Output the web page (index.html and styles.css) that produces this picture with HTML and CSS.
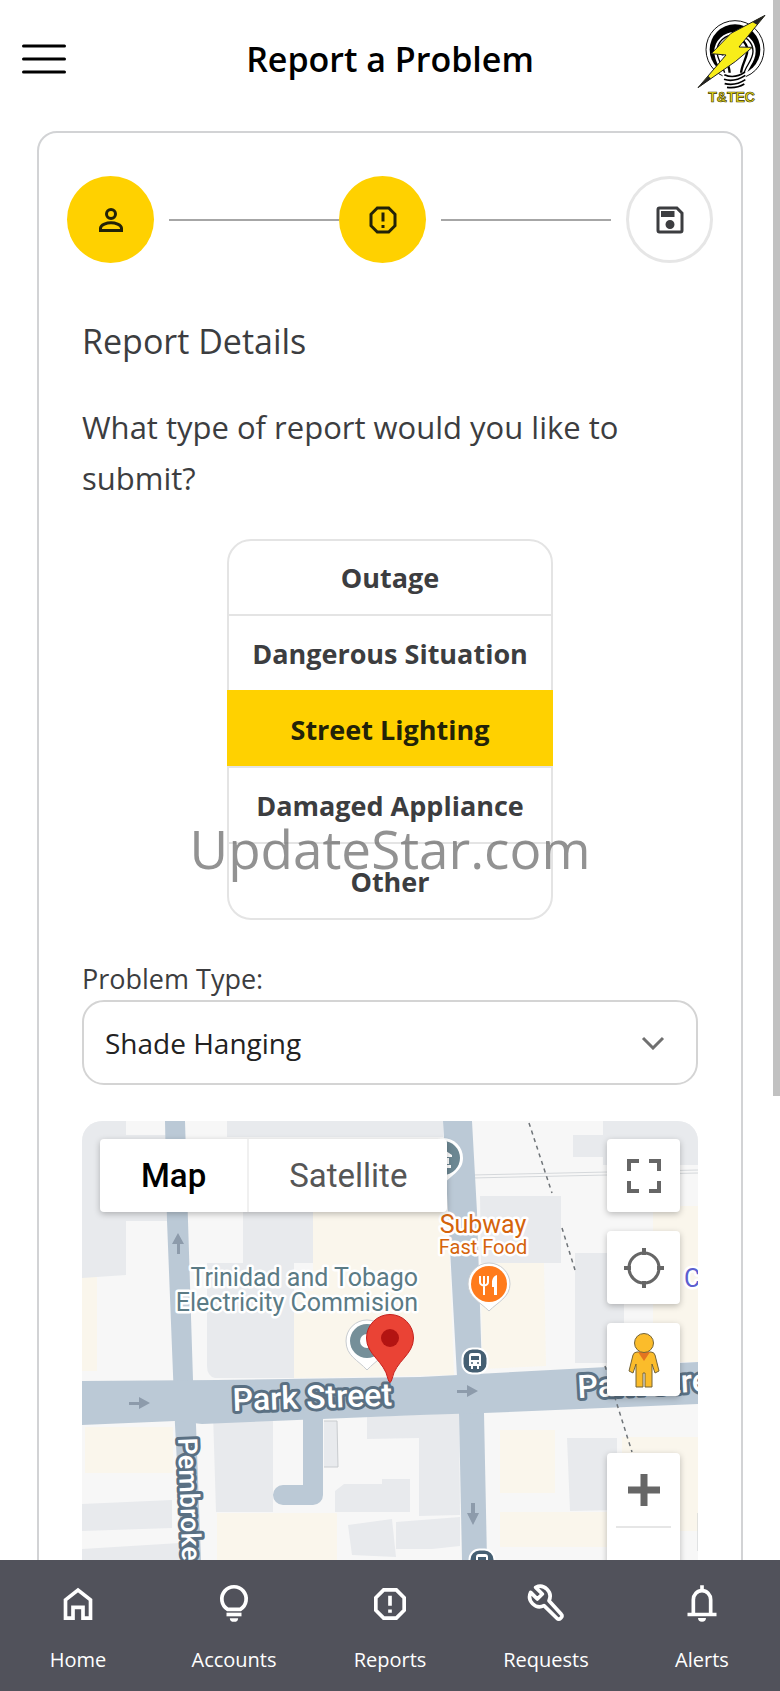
FILE: index.html
```html
<!DOCTYPE html>
<html lang="en">
<head>
<meta charset="utf-8">
<meta name="viewport" content="width=device-width, initial-scale=1">
<title>Report a Problem</title>
<link rel="stylesheet" href="styles.css">
</head>
<body>
<div class="app">
  <header class="topbar">
    <button class="menu-button" type="button" aria-label="Menu">
      <svg viewBox="0 0 44 30" width="44" height="30" stroke="#000" stroke-width="3" stroke-linecap="round"><path d="M1.500 2H42.500M1.500 15H42.500M1.500 28H42.500"/></svg>
    </button>
    <h1 class="topbar-title">Report a Problem</h1>
    <svg class="logo" viewBox="50 40 207 270" role="img" aria-label="T&amp;TEC">
      <circle cx="164" cy="147" r="87" fill="#fff" stroke="#111" stroke-width="3"/>
      <circle cx="164" cy="147" r="76" fill="#000"/>
      <path d="M128 232c-2-26-26-46-26-80a62 58 0 0 1 124 0c0 34-28 54-30 80z" fill="#fff"/>
      <path d="M134 222c-4-26-24-42-24-70a54 50 0 0 1 108 0c0 28-24 44-28 70z" fill="#fff" stroke="#000" stroke-width="4"/>
      <path d="M128 164a38 38 0 1 1 72-6c-4 20-16 36-18 60M148 218c0-20-9-34-16-48" fill="none" stroke="#000" stroke-width="7"/>
      <path d="M122 216l14 12v24q28 20 56 0v-24l12-12z" fill="#fff"/>
      <path d="M132 222q30 14 62-8M131 236q30 10 64-12M133 249q32 8 62-12M140 260q28 4 52-10" fill="none" stroke="#000" stroke-width="5"/>
      <path d="M254 44L152 98L93 159L137 163L53 261L166 182L216 140L176 139Z" fill="#f8ed19" stroke="#222" stroke-width="3"/>
      <path d="M254 44L216 64L230 72ZM53 261L84 226L92 234Z" fill="#222"/>
      <text x="154" y="303" text-anchor="middle" class="logo-text">T&amp;TEC</text>
    </svg>
  </header>

  <main class="content">
    <section class="card">
      <ol class="steps">
        <li class="step step-done" aria-label="Contact">
          <svg viewBox="0 0 24 24" width="36" height="36" fill="none" stroke="currentColor" stroke-width="2"><circle cx="12" cy="8" r="3"/><path d="M5 19v-1.500c0-2.500 4.500-3.700 7-3.700s7 1.200 7 3.700V19z"/></svg>
        </li>
        <li class="step-line" aria-hidden="true"></li>
        <li class="step step-done" aria-current="step" aria-label="Details">
          <svg viewBox="0 0 24 24" width="36" height="36" fill="none" stroke="currentColor" stroke-width="2"><path d="M8.200 4h7.600l4.200 4.200v7.600l-4.200 4.200H8.200L4 15.800V8.200zM12 7v6M12 15.300v2"/></svg>
        </li>
        <li class="step-line step-line-last" aria-hidden="true"></li>
        <li class="step step-todo" aria-label="Save">
          <svg viewBox="0 0 24 24" width="36" height="36" fill="currentColor"><path fill-rule="evenodd" d="M17 3H5a2 2 0 0 0-2 2v14a2 2 0 0 0 2 2h14a2 2 0 0 0 2-2V7zM19 19H5V5h11.200L19 7.800zM12 12a3 3 0 1 0 0 6 3 3 0 0 0 0-6zM6 6h9v4H6z"/></svg>
        </li>
      </ol>

      <form class="report">
        <h2 class="section-title">Report Details</h2>
        <fieldset class="question">
          <legend class="question-text">What type of report would you like to submit?</legend>
          <div class="options">
            <label class="option"><input type="radio" name="type">Outage</label>
            <label class="option"><input type="radio" name="type">Dangerous Situation</label>
            <label class="option"><input type="radio" name="type" checked>Street Lighting</label>
            <label class="option"><input type="radio" name="type">Damaged Appliance</label>
            <label class="option"><input type="radio" name="type">Other</label>
            <span class="watermark">UpdateStar.com</span>
          </div>
        </fieldset>

        <label class="field-label" for="problem">Problem Type:</label>
        <div class="select-box">
          <select class="select" id="problem"><option>Shade Hanging</option></select>
          <svg class="chevron" viewBox="0 0 24 14" width="24" height="14" fill="none" stroke="#707070" stroke-width="3"><path d="M2 2l10 10L22 2"/></svg>
        </div>

        <div class="map">
          <svg class="map-canvas" viewBox="0 0 616 520" preserveAspectRatio="xMidYMin slice">
            <rect width="616" height="520" fill="#f7f7f7"/>
            <g fill="#faf6ec">
              <path d="M231 91H366L372 254L212 257V170H231ZM399 142H462L464 245L400 248ZM571 85H616V241H571ZM0 156H15V250H0ZM3 306H91V352H3ZM135 392H255V439H135ZM418 309H473V372H418ZM418 391H525V426H418ZM540 316H616V410H540Z"/>
            </g>
            <g fill="#e8eaed">
              <path d="M0 0H44V14L85 14L90 100H44V154L0 157ZM145 0H361V16H145ZM161 91H231V142H212V257H133Q125 255 125 245V142H161ZM521 0H616V44H521ZM491 14H525V36H491ZM398 75H479V142H399ZM493 132H542V242H493Z"/>
              <path d="M0 383L90 379V407L0 410ZM0 428L98 422V439H0ZM131 292H191V391H134ZM242 300H255L256 346H242ZM285 296L377 292L378 394L337 395V317L285 318ZM253 370L262 363H300V358H328V391H253ZM266 404L310 398L314 436L270 434ZM314 401L378 396V425L350 428H314ZM485 317H535V389L488 390Z"/>
            </g>
            <path d="M390 54L616 49M390 57L616 52" stroke="#d5d8db" stroke-width="1" fill="none"/>
            <path d="M242 300H255L256 346H242M616 392V430" stroke="#c9cccf" stroke-width="1" fill="none"/>
            <g fill="#bbc9d6">
              <path d="M83 0H103L106 100L111 259L114 304L119 439L122 520H103L100 439L93 304L85 100Z"/>
              <path d="M361 0H390L395 91L400 250L402 292L405 439L407 520H382L380 439L377 292L366 91Z"/>
              <path d="M0 260L135 259L338 256L525 246L616 241V283L402 292L338 294L120 303L93 300L0 304Z"/>
            </g>
            <path d="M231 293V374H201" fill="none" stroke="#bbc9d6" stroke-width="20" stroke-linecap="round" stroke-linejoin="round"/>
            <path d="M447 2L470 72M480 107L493 149M523 245L550 331" fill="none" stroke="#6f7478" stroke-width="1.500" stroke-dasharray="4 4"/>
            <g fill="#8d9bab">
              <path id="arrow" d="M47 281H57V276L68 282L57 288V284H47Z"/>
              <use href="#arrow" x="328" y="-12"/>
              <path d="M95 133V123H90L96 112L102 123H98V133ZM389 382V392H385L391 404L397 392H393V382Z"/>
            </g>

            <g class="place place-civic">
              <text x="336" y="165" text-anchor="end">Trinidad and Tobago</text>
              <text x="336" y="190" text-anchor="end">Electricity Commision</text>
            </g>
            <g class="place place-food">
              <text x="401" y="112" text-anchor="middle">Subway</text>
              <text x="401" y="133" text-anchor="middle" class="place-small">Fast Food</text>
            </g>
            <text x="602" y="166" class="place place-shop">C</text>
            <text class="road" transform="translate(151 290) rotate(-2)">Park Street</text>
            <text class="road" transform="translate(496 277) rotate(-3)">Park Street</text>
            <text class="road road-small" transform="translate(96 317) rotate(88)">Pembroke</text>

            <path d="M341 37a20 20 0 1 1 40 0c0 13-11 16-20 27c-9-11-20-14-20-27z" fill="#fff"/>
            <circle cx="361" cy="37" r="17" fill="#6c8792"/>
            <path d="M352 34l9-6 9 6v2h-18zM355 37h2v6h-2zM360 37h2v6h-2zM365 37h2v6h-2zM352 44h17v3h-17z" fill="#fff"/>
            <path d="M264 220a21 21 0 1 1 42 0c0 15-12 19-21 29c-9-10-21-14-21-29z" fill="#fff" stroke="#c8ccd0" stroke-width="1"/>
            <circle cx="285" cy="220" r="17" fill="#758f99"/><circle cx="285" cy="220" r="7" fill="#fff"/>
            <path d="M386 163a21 21 0 1 1 42 0c0 13-12 18-21 27c-9-9-21-14-21-27z" fill="#fff" stroke="#c8ccd0" stroke-width="1"/>
            <circle cx="407" cy="163" r="18" fill="#ff7b1c"/>
            <path d="M398 155v6q0 3 4 3.500V174M402 155v9M406 155v6q0 3-4 3.500" fill="none" stroke="#fff" stroke-width="2"/>
            <path d="M415 154v20h-3v-8h-2v-6q1-5 5-6z" fill="#fff"/>
            <path d="M284.500 217a23.500 23.500 0 1 1 47 0c0 17-18 23-21.500 41q-2 7-4 0c-3.500-18-21.500-24-21.500-41z" fill="#ea4335" stroke="#c5221f" stroke-width="1"/>
            <circle cx="308" cy="217" r="9" fill="#b31412"/>
            <g id="bus">
              <rect x="380.500" y="227.500" width="25" height="25" rx="10" fill="#455f72" stroke="#fff" stroke-width="2"/>
              <path d="M387 235q0-3 3-3h6q3 0 3 3v10h-2v3h-2v-3h-4v3h-2v-3h-2z" fill="#fff"/>
              <path d="M389 235h8v4h-8z" fill="#455f72"/><circle cx="390" cy="242" r="1" fill="#455f72"/><circle cx="396" cy="242" r="1" fill="#455f72"/>
            </g>
            <use href="#bus" x="7" y="201"/>
          </svg>

          <div class="map-types">
            <button class="map-type map-type-on" type="button">Map</button>
            <button class="map-type" type="button">Satellite</button>
          </div>
          <div class="map-tools">
            <button class="map-tool" type="button" aria-label="Full screen">
              <svg viewBox="0 0 34 34" width="34" height="34" fill="none" stroke="#666" stroke-width="4"><path d="M2 12V2H12M22 2H32V12M32 22V32H22M12 32H2V22"/></svg>
            </button>
            <button class="map-tool" type="button" aria-label="My location">
              <svg viewBox="0 0 40 40" width="40" height="40" fill="none" stroke="#666" stroke-width="3"><circle cx="20" cy="20" r="15"/><path d="M20 0V7M20 33V40M0 20H7M33 20H40" stroke-width="4"/></svg>
            </button>
            <button class="map-tool" type="button" aria-label="Street view">
              <svg viewBox="0 0 32 56" width="32" height="56" fill="#fbbc2b" stroke="#736337" stroke-width="1"><path d="M9 20h14q3 0 4 3l4 16-4 2-3-9v23H17V41h-2v14H8V32l-3 9-4-2 4-16q1-3 4-3z"/><path d="M10 20h12l-6 9z" fill="#e37420" stroke="none"/><circle cx="16" cy="11" r="9.500"/></svg>
            </button>
            <div class="map-zoom">
              <button class="map-tool-plain" type="button" aria-label="Zoom in">
                <svg viewBox="0 0 32 32" width="32" height="32" stroke="#666" stroke-width="7"><path d="M0 16H32M16 0V32"/></svg>
              </button>
              <button class="map-tool-plain" type="button" aria-label="Zoom out">
                <svg viewBox="0 0 32 32" width="32" height="32" stroke="#666" stroke-width="7"><path d="M0 16H32"/></svg>
              </button>
            </div>
          </div>
        </div>
      </form>
    </section>
  </main>

  <nav class="tabs">
    <a class="tab" href="#home">
      <svg viewBox="0 0 24 24" width="40" height="40" fill="none" stroke="currentColor" stroke-width="2.200"><path d="M4.500 9.500L12 3.700l7.500 5.800V20.500h-4.500v-6.500H9v6.500H4.500z"/></svg>
      Home
    </a>
    <a class="tab" href="#accounts">
      <svg viewBox="0 0 24 24" width="40" height="40" fill="none" stroke="currentColor" stroke-width="2.200"><path d="M8.200 15.200a7.300 7.300 0 1 1 7.600 0z"/><path d="M7.500 18.300h9"/><path d="M9.500 20.500h5a2.500 2.200 0 0 1-5 0z" fill="currentColor" stroke="none"/></svg>
      Accounts
    </a>
    <a class="tab" href="#reports">
      <svg viewBox="0 0 24 24" width="40" height="40" fill="none" stroke="currentColor" stroke-width="2.200"><path d="M8.200 3.500h7.600l4.700 4.700v7.600l-4.700 4.700H8.200l-4.700-4.700V8.200zM12 7v6M12 15.300v2"/></svg>
      Reports
    </a>
    <a class="tab" href="#requests">
      <svg viewBox="0 0 24 24" width="40" height="40" fill="none" stroke="currentColor" stroke-width="2.200" stroke-linejoin="round"><path d="M2.800 5l4 4 3-3-4-4a6 6 0 0 1 8 8l7.400 8.200a1.300 1.300 0 0 1 0 1.900l-.6.600a1.300 1.300 0 0 1-1.900 0L10.800 13A6 6 0 0 1 2.800 5z"/></svg>
      Requests
    </a>
    <a class="tab" href="#alerts">
      <svg viewBox="0 0 24 24" width="40" height="40" fill="none" stroke="currentColor" stroke-width="2.200"><path d="M6.800 18V9.500a5.200 5.500 0 0 1 10.400 0V18M3.300 18.300h17.400M12 .8v3.500"/><path d="M9.600 20.400h4.800a2.400 2.200 0 0 1-4.800 0z" fill="currentColor" stroke="none"/></svg>
      Alerts
    </a>
  </nav>
  <div class="scroll-thumb" aria-hidden="true"></div>
</div>
</body>
</html>
```
FILE: styles.css
```css
* { box-sizing: border-box; }

body {
  margin: 0;
  background: #fff;
  color: #3c3d40;
  font-family: "Open Sans", "Noto Sans", sans-serif;
}

button, select { font: inherit; color: inherit; }

svg { display: block; }

.app {
  position: relative;
  display: flex;
  flex-direction: column;
  height: 100vh;
  overflow: hidden;
}

.topbar {
  flex: none;
  display: grid;
  grid-template-columns: 80px 1fr 80px;
  align-items: center;
  padding: 14px 14px 26px 22px;
}

.menu-button {
  justify-self: start;
  padding: 0;
  border: 0;
  background: none;
}

.topbar-title {
  margin: 0;
  padding-right: 8px;
  color: #000;
  font-size: 34px;
  line-height: 48px;
  font-weight: 600;
  text-align: center;
}

.logo {
  justify-self: end;
  width: 69px;
  height: 90px;
}

.logo-text {
  font-family: "Liberation Sans", sans-serif;
  font-size: 42px;
  font-weight: 700;
  fill: #f3e51c;
  stroke: #3a3600;
  stroke-width: 2px;
}

.content {
  flex: 1;
  min-height: 0;
  overflow: hidden;
  padding: 1px 37px 0;
}

.card {
  border: 2px solid #d2d3d5;
  border-radius: 20px;
  padding: 43px 28px;
}

.steps {
  display: flex;
  align-items: center;
  margin: 0;
  padding: 0;
  list-style: none;
}

.step {
  flex: none;
  display: flex;
  align-items: center;
  justify-content: center;
  width: 87px;
  height: 87px;
  border-radius: 50%;
}

.step-done { background: #ffd100; color: #222208; }

.step-todo { border: 3px solid #e6e6e6; }

.step-line {
  flex: 1;
  height: 2px;
  margin-left: 15px;
  background: #a6a6a6;
}

.step-line-last { margin-right: 15px; }

.report { padding: 52px 15px 0; }

.section-title {
  margin: 0 0 35px;
  font-size: 34px;
  line-height: 52px;
  font-weight: 400;
}

.question {
  margin: 0;
  padding: 0;
  border: 0;
}

.question-text {
  padding: 0;
  font-size: 31px;
  line-height: 51px;
}

.options {
  position: relative;
  width: 326px;
  margin: 35px auto 0;
  border: 2px solid #e4e4e4;
  border-radius: 24px;
}

.option {
  display: flex;
  align-items: center;
  justify-content: center;
  height: 76px;
  font-size: 27px;
  font-weight: 700;
}

.option:first-of-type { height: 73px; }

.option + .option { border-top: 2px solid #e4e4e4; }

.option input {
  position: absolute;
  opacity: 0;
}

.option:has(input:checked) {
  margin: 0 -2px;
  border-color: #ffd100;
  background: #ffd100;
  color: #222208;
}

.watermark {
  position: absolute;
  left: 50%;
  bottom: 32px;
  transform: translateX(-50%);
  color: rgba(110, 110, 110, 0.750);
  font-size: 53px;
  line-height: 75px;
}

.field-label {
  display: block;
  margin-top: 38px;
  font-size: 27px;
  line-height: 42px;
}

.select-box { position: relative; }

.select {
  display: block;
  width: 100%;
  height: 85px;
  padding: 0 64px 0 21px;
  border: 2px solid #d4d4d4;
  border-radius: 22px;
  background: #fff;
  color: #222;
  font-size: 28px;
  appearance: none;
}

.chevron {
  position: absolute;
  right: 33px;
  top: 36px;
}

.map {
  position: relative;
  height: 520px;
  margin-top: 36px;
  border-radius: 20px;
  overflow: hidden;
  font-family: Roboto, sans-serif;
}

.map-canvas {
  width: 100%;
  height: 100%;
}

.place {
  font-size: 25px;
  paint-order: stroke;
  stroke: #fff;
  stroke-width: 5px;
  stroke-linejoin: round;
}

.place-civic { fill: #5b7b85; }
.place-food { fill: #d5640c; }
.place-shop { fill: #5c5fd0; }
.place-small { font-size: 20px; }

.road {
  font-size: 32px;
  font-weight: 500;
  fill: #fff;
  paint-order: stroke;
  stroke: #5a7083;
  stroke-width: 6px;
  stroke-linejoin: round;
}

.road-small { font-size: 27px; }

.map-types {
  position: absolute;
  top: 18px;
  left: 18px;
  display: flex;
  border-radius: 4px;
  background: #fff;
  box-shadow: 0 2px 6px rgba(0, 0, 0, 0.250);
}

.map-type {
  height: 73px;
  padding: 0 40px;
  border: 0;
  background: none;
  color: #565656;
  font-size: 33px;
}

.map-type-on {
  padding: 0 41px;
  border-right: 2px solid #f0f0f0;
  color: #000;
  font-weight: 500;
}

.map-tools {
  position: absolute;
  top: 18px;
  right: 18px;
  display: flex;
  flex-direction: column;
  gap: 19px;
}

.map-tool, .map-zoom {
  width: 73px;
  border-radius: 4px;
  background: #fff;
  box-shadow: 0 2px 6px rgba(0, 0, 0, 0.250);
}

.map-tool, .map-tool-plain {
  display: flex;
  align-items: center;
  justify-content: center;
  height: 73px;
  padding: 0;
  border: 0;
  background: #fff;
}

.map-zoom {
  margin-top: 38px;
  padding: 0 9px;
}

.map-tool-plain {
  width: 100%;
  background: none;
}

.map-tool-plain + .map-tool-plain { border-top: 2px solid #e6e6e6; }

.tabs {
  flex: none;
  display: grid;
  grid-template-columns: repeat(5, 1fr);
  padding: 24px 0 16px;
  background: #51525b;
}

.tab {
  display: flex;
  flex-direction: column;
  align-items: center;
  gap: 20px;
  color: #fff;
  font-size: 20px;
  line-height: 31px;
  text-decoration: none;
}

.scroll-thumb {
  position: absolute;
  top: 0;
  right: 0;
  width: 7px;
  height: 1096px;
  background: #c1c1c1;
}
```
